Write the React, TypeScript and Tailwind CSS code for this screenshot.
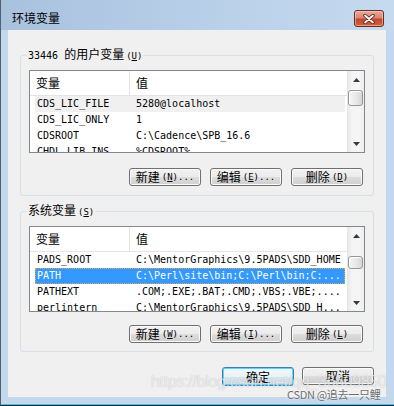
import React from 'react';

type Row = { name: string; value: string; state?: 'gray' | 'blue' };

const userRows: Row[] = [
  { name: 'CDS_LIC_FILE', value: '5280@localhost', state: 'gray' },
  { name: 'CDS_LIC_ONLY', value: '1' },
  { name: 'CDSROOT', value: 'C:\\Cadence\\SPB_16.6' },
  { name: 'CHDL_LIB_INS...', value: '%CDSROOT%' },
];

const sysRows: Row[] = [
  { name: 'PADS_ROOT', value: 'C:\\MentorGraphics\\9.5PADS\\SDD_HOME' },
  { name: 'PATH', value: 'C:\\Perl\\site\\bin;C:\\Perl\\bin;C:...', state: 'blue' },
  { name: 'PATHEXT', value: '.COM;.EXE;.BAT;.CMD;.VBS;.VBE;....' },
  { name: 'perlintern', value: 'C:\\MentorGraphics\\9.5PADS\\SDD_H...' },
];

function Mono({ children, className = '' }: { children: React.ReactNode; className?: string }) {
  return <span className={`font-['DejaVu_Sans_Mono',monospace] ${className}`}>{children}</span>;
}

// access key like (N) with the letter underlined
function Key({ k, dots }: { k: string; dots?: boolean }) {
  return (
    <Mono className="text-[9px] ml-[2px]">
      (<span className="underline underline-offset-1">{k}</span>){dots ? '...' : ''}
    </Mono>
  );
}

function Arrow({ down }: { down?: boolean }) {
  return (
    <div className={`flex justify-center ${down ? 'h-[15px] items-start pt-[5px]' : 'h-[17px] items-center'}`}>
      <svg width="7" height="4" viewBox="0 0 7 4">
        <path d={down ? 'M0 0H7L3.5 4Z' : 'M3.5 0L7 4H0Z'} fill="#3a3a3a" />
      </svg>
    </div>
  );
}

function ScrollBar({ thumb }: { thumb: string }) {
  return (
    <div className="w-[17px] h-full flex flex-col border-l border-[#e6e6e6] bg-[linear-gradient(to_right,#e9e9e9,#f5f5f5_25%,#f5f5f5_75%,#ececec)]">
      <Arrow />
      <div
        className={`mr-[1px] rounded-[3px] border border-[#979797] bg-[linear-gradient(to_right,#f6f6f6,#e8e8e8_55%,#d6d6d6)] shadow-[inset_1px_1px_0_#ffffff] ${thumb}`}
      />
      <div className="flex-1" />
      <Arrow down />
    </div>
  );
}

function VarList({ rows, h, thumb }: { rows: Row[]; h: string; thumb: string }) {
  return (
    <div className={`ml-[8px] w-[336px] ${h} border border-[#828790] bg-white flex overflow-hidden`}>
      <div className="w-[317px] flex flex-col">
        <div className="h-[25px] shrink-0 flex border-b border-[#e5e5e5] text-[12px] leading-none">
          <div className="w-[100px] border-r border-[#e5e5e5] pl-[6px] flex items-center">变量</div>
          <div className="flex-1 pl-[6px] flex items-center">值</div>
        </div>
        {rows.map((r) => (
          <div
            key={r.name}
            className={`ml-[5px] w-[310px] h-[16px] shrink-0 flex leading-[16px] text-[10px] font-['DejaVu_Sans_Mono',monospace] whitespace-pre
              ${r.state === 'gray' ? 'bg-[#f0f0f0]' : ''}
              ${r.state === 'blue' ? 'bg-[#3399ff] text-white outline outline-1 outline-dotted -outline-offset-1 outline-[#e9a04a]' : ''}`}
          >
            <div className="w-[99px] pl-[2px] overflow-hidden">{r.name}</div>
            <div className="flex-1 pl-[2px] overflow-hidden">{r.value}</div>
          </div>
        ))}
      </div>
      <ScrollBar thumb={thumb} />
    </div>
  );
}

function Btn({ children, primary }: { children: React.ReactNode; primary?: boolean }) {
  return (
    <button
      type="button"
      className={`w-[72px] flex items-center justify-center rounded-[3px] border text-[12px] leading-none text-black
        ${primary
          ? 'h-[19px] border-[#3c7fb1] shadow-[inset_0_0_0_1px_#5fd3f7] bg-[linear-gradient(to_bottom,#f3f9fc_0%,#e8f2f8_50%,#d6e7f1_51%,#c8dde9_100%)]'
          : 'h-[18px] border-[#707070] shadow-[inset_0_0_0_1px_#fbfbfb] bg-[linear-gradient(to_bottom,#f2f2f2_0%,#ebebeb_50%,#dddddd_51%,#cfcfcf_100%)]'}`}
    >
      {children}
    </button>
  );
}

function Group({ legend, children }: { legend: React.ReactNode; children: React.ReactNode }) {
  return (
    <fieldset className="ml-[12px] w-[354px] h-[149px] border border-[#d5dfe5] rounded-[3px]">
      <legend className="ml-[6px] px-[1px] leading-[14px] text-[12px]">{legend}</legend>
      {children}
    </fieldset>
  );
}

export default function App() {
  return (
    <div className="w-[394px] h-[406px] relative overflow-hidden flex flex-col bg-[#c3d8ed] border-l border-b border-l-[#51606f] border-b-[#1c2630] font-['Noto_Sans_CJK_SC',sans-serif] text-black">
      {/* title bar */}
      <div className="h-[30px] shrink-0 flex items-start justify-between pl-[11px] pr-[10px] pt-[10px] bg-[linear-gradient(to_right,#a8c1dd,#b9d0e9_55%,#c6daef)]">
        <span className="text-[12px] leading-[16px]">环境变量</span>
        <div className="w-[30px] h-[17px] flex items-center justify-center rounded-[3px] border border-[#6b2a1e] bg-[linear-gradient(to_bottom,#e8ab9c_0%,#d98470_45%,#c5462c_55%,#d2603f_100%)] shadow-[inset_0_0_0_1px_rgba(255,220,210,0.5)]">
          <svg width="12" height="10" viewBox="0 0 12 10">
            <path d="M2 1.5L10 8.5M10 1.5L2 8.5" stroke="#4a1a12" strokeWidth="3.4" strokeLinecap="round" />
            <path d="M2 1.5L10 8.5M10 1.5L2 8.5" stroke="#ffffff" strokeWidth="1.8" strokeLinecap="round" />
          </svg>
        </div>
      </div>

      {/* client area */}
      <div className="ml-[7px] w-[378px] h-[367px] shrink-0 bg-[#f0f0f0] flex flex-col">
        <div className="mt-[17px]">
          <Group
            legend={
              <>
                <Mono className="text-[10px]">33446 </Mono>的用户变量<Key k="U" />
              </>
            }
          >
            <div className="mt-[7px]">
              <VarList rows={userRows} h="h-[83px]" thumb="mt-[2px] h-[16px]" />
            </div>
            <div className="mt-[15px] ml-[108px] flex gap-[9px]">
              <Btn>新建<Key k="N" dots /></Btn>
              <Btn>编辑<Key k="E" dots /></Btn>
              <Btn>删除<Key k="D" /></Btn>
            </div>
          </Group>
        </div>

        <div className="mt-[7px]">
          <Group
            legend={
              <>
                系统变量<Key k="S" />
              </>
            }
          >
            <div className="mt-[7px]">
              <VarList rows={sysRows} h="h-[86px]" thumb="mt-[12px] h-[13px]" />
            </div>
            <div className="mt-[13px] ml-[108px] flex gap-[9px]">
              <Btn>新建<Key k="W" dots /></Btn>
              <Btn>编辑<Key k="I" dots /></Btn>
              <Btn>删除<Key k="L" /></Btn>
            </div>
          </Group>
        </div>

        <div className="mt-[15px] mr-[12px] flex justify-end gap-[8px]">
          <Btn primary>确定</Btn>
          <Btn>取消</Btn>
        </div>
      </div>

      <div className="mt-[7px] h-[1px] bg-[#3fc6e8]" />

      {/* csdn watermark */}
      <div className="absolute left-[150px] top-[372px] text-[16px] leading-[20px] tracking-[-0.3px] font-['Liberation_Sans',sans-serif] text-white/70 [text-shadow:0_0_1px_rgba(0,0,0,0.25)]">
        https://blog.csdn.net/qq_36609850
      </div>
      <div className="absolute left-[286px] top-[388px] text-[11px] leading-[13px] tracking-[-0.3px] text-[#6f6f6f] [text-shadow:0_0_2px_#ffffff] whitespace-nowrap">
        CSDN @追去一只鲤
      </div>
    </div>
  );
}
